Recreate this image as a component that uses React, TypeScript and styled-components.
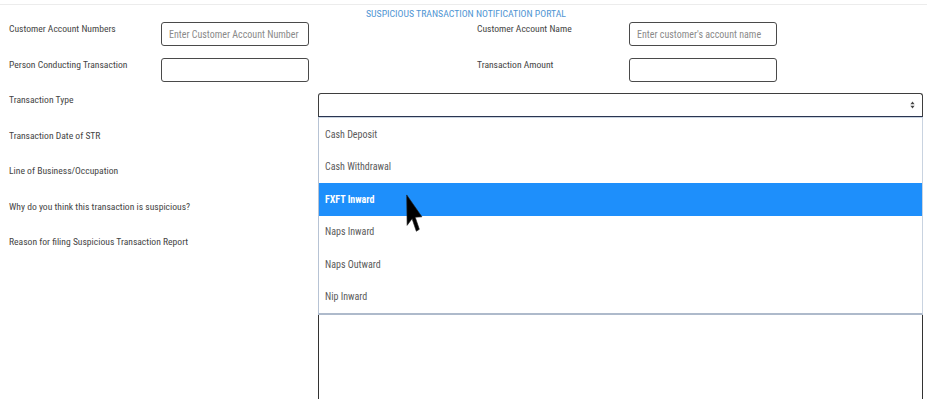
import React from "react";
import styled, { createGlobalStyle } from "styled-components";

const Global = createGlobalStyle`
  html, body { margin: 0; padding: 0; background: #ffffff; }
  body { font-family: "Liberation Sans Narrow", "Roboto Condensed", "DejaVu Sans Condensed", Roboto, sans-serif; }
  * { box-sizing: border-box; }
`;

const Page = styled.div`
  width: 927px;
  padding-top: 4px;
  position: relative;
  height: 399px;
  overflow: hidden;
`;

const Container = styled.div`
  border-top: 1px solid #ececec;
  padding: 0 4px 0 9px;
`;

const Title = styled.div`
  text-align: center;
  color: #4f95d3;
  font-size: 9.8px;
  line-height: 12px;
  height: 17px;
  padding-top: 3px;
`;

const PairRow = styled.div`
  display: grid;
  grid-template-columns: 152px 148px 168px 152px 148px;
  height: 35.5px;
  align-items: start;
`;

const WideRow = styled.div`
  display: grid;
  grid-template-columns: 309px 605px;
  height: 35.5px;
  align-items: start;
`;

const Label = styled.label`
  font-size: 9.6px;
  color: #454545;
  line-height: 14px;
`;

const TextInput = styled.input`
  width: 148px;
  height: 24px;
  border: 1px solid #4a4a4a;
  border-radius: 3px;
  font-family: inherit;
  font-size: 10px;
  padding: 0 7px;
  color: #333;
  outline: none;
  &::placeholder { color: #8a8a8a; }
`;

const SelectBox = styled.div`
  width: 605px;
  height: 24px;
  border: 1px solid #3e3e3e;
  border-bottom-color: #2a3550;
  border-radius: 3px 3px 0 0;
  display: flex;
  align-items: center;
  justify-content: flex-end;
  padding-right: 7px;
  background: #fff;
`;

const Field = styled.div`
  width: 605px;
  height: 24px;
  border: 1px solid #3e3e3e;
  border-radius: 3px;
`;

const TextArea = styled.textarea`
  width: 605px;
  height: 220px;
  border: 1px solid #333333;
  border-radius: 3px;
  resize: none;
  font-family: inherit;
  outline: none;
  display: block;
`;

const Menu = styled.ul`
  position: absolute;
  left: 318px;
  top: 117px;
  width: 605px;
  margin: 0;
  padding: 0;
  list-style: none;
  background: #fff;
  border: 1px solid #c9d3e0;
  border-left-color: #b7c3d4;
  border-bottom: 2px solid #aebacb;
  z-index: 5;
`;

const Option = styled.li<{ $active?: boolean }>`
  height: 32.5px;
  display: flex;
  align-items: center;
  padding-left: 6px;
  font-size: 10px;
  color: ${(p) => (p.$active ? "#ffffff" : "#5a5a5a")};
  background: ${(p) => (p.$active ? "#1e8ffb" : "transparent")};
  font-weight: ${(p) => (p.$active ? 700 : 400)};
`;

const Cursor = styled.svg`
  position: absolute;
  left: 406px;
  top: 194px;
  z-index: 10;
`;

const options = [
  "Cash Deposit",
  "Cash Withdrawal",
  "FXFT Inward",
  "Naps Inward",
  "Naps Outward",
  "Nip Inward",
];

function SortArrows() {
  return (
    <svg width="5" height="8" viewBox="0 0 5 8">
      <path d="M2.5 0.5 L4.6 3.2 L0.4 3.2 Z" fill="#444" />
      <path d="M2.5 7.5 L4.6 4.8 L0.4 4.8 Z" fill="#444" />
    </svg>
  );
}

export default function App() {
  return (
    <>
      <Global />
      <Page>
        <Container>
          <Title>SUSPICIOUS TRANSACTION NOTIFICATION PORTAL</Title>
          <PairRow>
            <Label>Customer Account Numbers</Label>
            <TextInput placeholder="Enter Customer Account Number" />
            <span />
            <Label>Customer Account Name</Label>
            <TextInput placeholder="Enter customer's account name" />
          </PairRow>
          <PairRow>
            <Label>Person Conducting Transaction</Label>
            <TextInput />
            <span />
            <Label>Transaction Amount</Label>
            <TextInput />
          </PairRow>
          <WideRow>
            <Label>Transaction Type</Label>
            <SelectBox>
              <SortArrows />
            </SelectBox>
          </WideRow>
          <WideRow>
            <Label>Transaction Date of STR</Label>
            <Field />
          </WideRow>
          <WideRow>
            <Label>Line of Business/Occupation</Label>
            <Field />
          </WideRow>
          <WideRow>
            <Label>Why do you think this transaction is suspicious?</Label>
            <Field />
          </WideRow>
          <WideRow>
            <Label>Reason for filing Suspicious Transaction Report</Label>
            <TextArea />
          </WideRow>
        </Container>
        <Menu>
          {options.map((o) => (
            <Option key={o} $active={o === "FXFT Inward"}>
              {o}
            </Option>
          ))}
        </Menu>
        <Cursor width="17" height="38" viewBox="0 0 12 20" preserveAspectRatio="none">
          <path
            d="M0.5 0.5 L0.8 16.5 L4.3 13 L7.3 19.6 L9.4 18.6 L6.5 12.2 L11.2 12 Z"
            fill="#000"
            stroke="#222"
            strokeWidth="0.4"
            strokeLinejoin="round"
          />
        </Cursor>
      </Page>
    </>
  );
}
